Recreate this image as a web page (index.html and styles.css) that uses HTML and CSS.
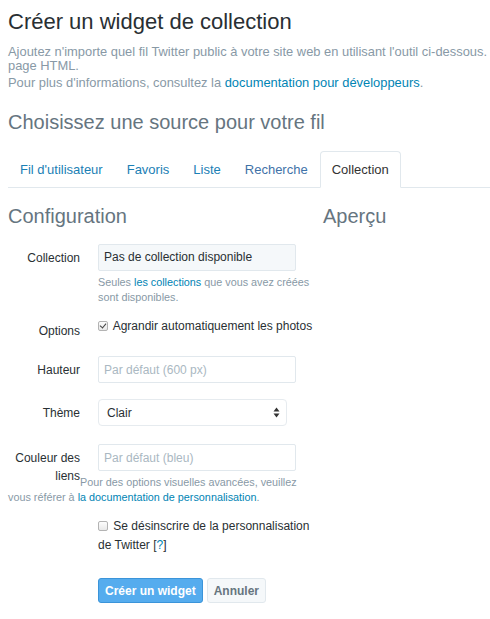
FILE: index.html
```html
<!DOCTYPE html>
<html lang="fr">
<head>
  <meta charset="UTF-8">
  <title>Créer un widget de collection</title>
  <link rel="stylesheet" href="styles.css">
</head>
<body>
  <div class="page">
    <h1>Créer un widget de collection</h1>
    <p class="lead">
      <span class="line">Ajoutez n'importe quel fil Twitter public à votre site web en utilisant l'outil ci-dessous.</span>
      <span class="line">page HTML.</span>
    </p>
    <p class="lead more">Pour plus d'informations, consultez la <a href="#">documentation pour développeurs</a>.</p>

    <h2>Choisissez une source pour votre fil</h2>

    <ul class="tabs">
      <li><a href="#">Fil d'utilisateur</a></li>
      <li><a href="#">Favoris</a></li>
      <li><a href="#">Liste</a></li>
      <li><a href="#" class="visited">Recherche</a></li>
      <li class="active"><a href="#">Collection</a></li>
    </ul>

    <div class="columns">
      <div class="config">
        <h3>Configuration</h3>

        <div class="form-group collection">
          <label>Collection</label>
          <div class="controls">
            <div class="field readonly">Pas de collection disponible</div>
            <p class="help">Seules <a href="#">les collections</a> que vous avez créées sont disponibles.</p>
          </div>
        </div>

        <div class="form-group options">
          <label>Options</label>
          <div class="controls">
            <label class="check"><input type="checkbox" checked> Agrandir automatiquement les photos</label>
          </div>
        </div>

        <div class="form-group">
          <label>Hauteur</label>
          <div class="controls">
            <input class="field" type="text" placeholder="Par défaut (600 px)">
          </div>
        </div>

        <div class="form-group theme">
          <label>Thème</label>
          <div class="controls">
            <div class="select">
              <span>Clair</span>
              <svg width="7" height="11" viewBox="0 0 7 11"><path d="M3.5 0.5 L6.5 4.5 H0.5 Z M3.5 10.5 L6.5 6.5 H0.5 Z" fill="#333"/></svg>
            </div>
          </div>
        </div>

        <div class="form-group colors">
          <label>Couleur des liens</label>
          <div class="controls">
            <input class="field" type="text" placeholder="Par défaut (bleu)">
          </div>
          <p class="help wrap">Pour des options visuelles avancées, veuillez vous référer à <a href="#">la documentation de personnalisation</a>.</p>
        </div>

        <div class="form-group optout">
          <div class="controls">
            <label class="check"><input type="checkbox"> Se désinscrire de la personnalisation de Twitter [<a href="#">?</a>]</label>
          </div>
        </div>

        <div class="actions">
          <button class="btn primary">Créer un widget</button>
          <button class="btn">Annuler</button>
        </div>
      </div>

      <div class="preview">
        <h3>Aperçu</h3>
      </div>
    </div>
  </div>
</body>
</html>
```

FILE: styles.css
```css
body {
  margin: 0;
  font-family: 'Liberation Sans', Arial, sans-serif;
  font-size: 13px;
  color: #292f33;
  background-color: #fff;
  overflow-x: hidden;
}

a {
  color: #0084b4;
  text-decoration: none;
}

.page {
  padding-left: 8px;
}

h1 {
  margin: 9px 0 0;
  font-size: 22px;
  line-height: 26px;
  font-weight: normal;
  color: #292f33;
}

.lead {
  margin: 10px 0 0;
  font-size: 12.9px;
  line-height: 14px;
  color: #8899a6;
}

.lead .line {
  display: block;
  white-space: nowrap;
}

.lead.more {
  margin-top: 3px;
}

h2 {
  margin: 19px 0 0;
  font-size: 20px;
  line-height: 26px;
  font-weight: normal;
  color: #66757f;
}

.tabs {
  display: flex;
  list-style: none;
  margin: 16px 0 0;
  padding: 0;
  border-bottom: 1px solid #e1e8ed;
}

.tabs li {
  margin-bottom: -1px;
}

.tabs a {
  display: block;
  padding: 9px 11px;
  line-height: 17px;
  border: 1px solid transparent;
  border-radius: 4px 4px 0 0;
  color: #1b80b5;
}

.tabs a.visited {
  color: #3f72a8;
}

.tabs .active a {
  color: #333;
  background-color: #fff;
  border-color: #e1e8ed;
  border-bottom-color: #fff;
}

.columns {
  display: grid;
  grid-template-columns: 315px 1fr;
}

h3 {
  margin: 16px 0 0;
  font-size: 20px;
  line-height: 24px;
  font-weight: normal;
  color: #66757f;
}

.config h3 {
  margin-bottom: 16px;
}

.form-group {
  margin-bottom: 16px;
  font-size: 12px;
}

.form-group::after {
  content: "";
  display: block;
  clear: both;
}

.form-group > label {
  float: left;
  width: 72px;
  padding-top: 5px;
  line-height: 18px;
  text-align: right;
}

.controls {
  margin-left: 90px;
}

.field {
  display: block;
  box-sizing: border-box;
  width: 198px;
  height: 27px;
  margin: 0;
  padding: 0 5px;
  font-family: inherit;
  font-size: 12px;
  line-height: 25px;
  color: #292f33;
  border: 1px solid #e1e8ed;
  border-radius: 2px;
  background-color: #fff;
  outline: none;
}

.field::placeholder {
  color: #aab8c2;
}

.field.readonly {
  background-color: #f5f8fa;
}

.help {
  margin: 4px 0 0;
  font-size: 10.8px;
  line-height: 15px;
  color: #8899a6;
}

.help.wrap {
  margin-top: 4px;
  max-width: 300px;
}

.form-group.collection {
  margin-bottom: 12px;
}

.form-group.theme {
  margin-bottom: 18px;
}

.form-group.colors::after {
  display: none;
}

.form-group.colors {
  margin-bottom: 12px;
}

.form-group.optout {
  margin-bottom: 0;
}

.check {
  display: block;
  font-size: 12px;
  line-height: 18px;
}

.optout .check {
  max-width: 212px;
  line-height: 19px;
}

.check input {
  appearance: none;
  -webkit-appearance: none;
  position: relative;
  box-sizing: border-box;
  width: 10px;
  height: 10px;
  margin: 0 2px 0 0;
  vertical-align: -1px;
  border: 1px solid #b3b3b3;
  border-radius: 2px;
  background: linear-gradient(#fdfdfd, #e9e9e9);
}

.check input:checked::after {
  content: "";
  position: absolute;
  left: 2px;
  top: 0;
  width: 3px;
  height: 5px;
  border: solid #444;
  border-width: 0 1.5px 1.5px 0;
  transform: rotate(40deg);
}

.select {
  display: flex;
  align-items: center;
  justify-content: space-between;
  box-sizing: border-box;
  width: 189px;
  height: 27px;
  padding: 0 6px 0 8px;
  border: 1px solid #e6ebef;
  border-radius: 4px;
  background-color: #fff;
}

.actions {
  margin: 23px 0 0 90px;
  display: flex;
  gap: 4px;
}

.btn {
  font-family: inherit;
  font-size: 12px;
  font-weight: bold;
  height: 25px;
  padding: 0 6px;
  border: 1px solid #e1e8ed;
  border-radius: 3px;
  background-color: #f5f8fa;
  color: #66757f;
  cursor: pointer;
}

.btn.primary {
  background-color: #55acee;
  border-color: #3b94d9;
  color: #fff;
}
```
